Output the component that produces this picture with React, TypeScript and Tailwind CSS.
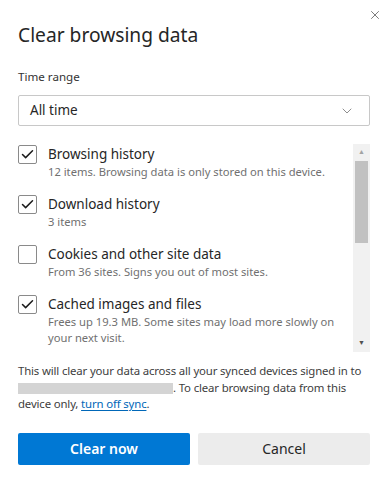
import { Check, ChevronDown, X } from 'lucide-react';

const items = [
  { title: 'Browsing history', desc: '12 items. Browsing data is only stored on this device.', checked: true },
  { title: 'Download history', desc: '3 items', checked: true },
  { title: 'Cookies and other site data', desc: 'From 36 sites. Signs you out of most sites.', checked: false },
  { title: 'Cached images and files', desc: 'Frees up 19.3 MB. Some sites may load more slowly on your next visit.', checked: true },
];

function Box({ checked }: { checked: boolean }) {
  return (
    <div className="w-[19px] h-[19px] shrink-0 border border-[#8a8a8a] rounded-[2px] flex items-center justify-center bg-white">
      {checked && <Check size={15} strokeWidth={2.4} className="text-[#1b1b1b]" />}
    </div>
  );
}

export default function App() {
  return (
    <div className="relative w-[390px] h-[485px] bg-white text-[#2b2b2b] overflow-hidden" style={{ fontFamily: '"Noto Sans", "Open Sans", sans-serif' }}>
      <button className="absolute top-[8px] right-[8px] w-[14px] h-[14px] flex items-center justify-center text-[#444]">
        <X size={14} strokeWidth={1.2} />
      </button>

      <div className="pl-[18px] pr-[18px]">
        <h1 className="pt-[21px] text-[19.2px] leading-[28px] text-[#262626]">Clear browsing data</h1>

        <div className="mt-[20px] text-[11.6px] leading-[16px] text-[#333]">Time range</div>
        <div className="mt-[10px] mr-[2px] h-[31px] border border-[#c8c8c8] rounded-[2px] flex items-center justify-between pl-[11px] pr-[14px]">
          <span className="text-[13.5px] text-[#262626]">All time</span>
          <ChevronDown size={16} strokeWidth={1} className="text-[#555]" />
        </div>

        <div className="mt-[18px] mr-[2px] h-[208px] flex">
          <div className="flex-1 overflow-hidden">
            {items.map((it) => (
              <div key={it.title} className="flex gap-[11px] pt-[1px] h-[50px]">
                <Box checked={it.checked} />
                <div className="pr-[8px]">
                  <div className="text-[13.5px] leading-[19px] text-[#262626]">{it.title}</div>
                  <div className="text-[11.2px] leading-[16px] text-[#707070]">{it.desc}</div>
                </div>
              </div>
            ))}
          </div>
          <div className="w-[17px] bg-[#f1f1f1] flex flex-col items-center">
            <div className="h-[17px] flex items-center justify-center text-[#a3a3a3] text-[7px]">▲</div>
            <div className="w-[13px] h-[82px] bg-[#c1c1c1]" />
            <div className="flex-1" />
            <div className="h-[17px] flex items-center justify-center text-[#505050] text-[7px]">▼</div>
          </div>
        </div>

        <p className="mt-[11px] text-[11.4px] leading-[16.5px] tracking-[-0.15px] text-[#404040]">
          This will clear your data across all your synced devices signed in to{' '}
          <span className="inline-block w-[155px] h-[11px] bg-[#d4d4d4] align-middle" />. To clear browsing data from this device only,{' '}
          <a className="text-[#0067b8] underline underline-offset-2">turn off sync</a>.
        </p>

        <div className="mt-[20px] mr-[2px] flex gap-[8px]">
          <button className="flex-1 h-[32px] bg-[#0078d4] text-white text-[14px] font-semibold rounded-[2px]">Clear now</button>
          <button className="flex-1 h-[32px] bg-[#ececec] text-[#262626] text-[14px] rounded-[2px]">Cancel</button>
        </div>
      </div>
    </div>
  );
}
